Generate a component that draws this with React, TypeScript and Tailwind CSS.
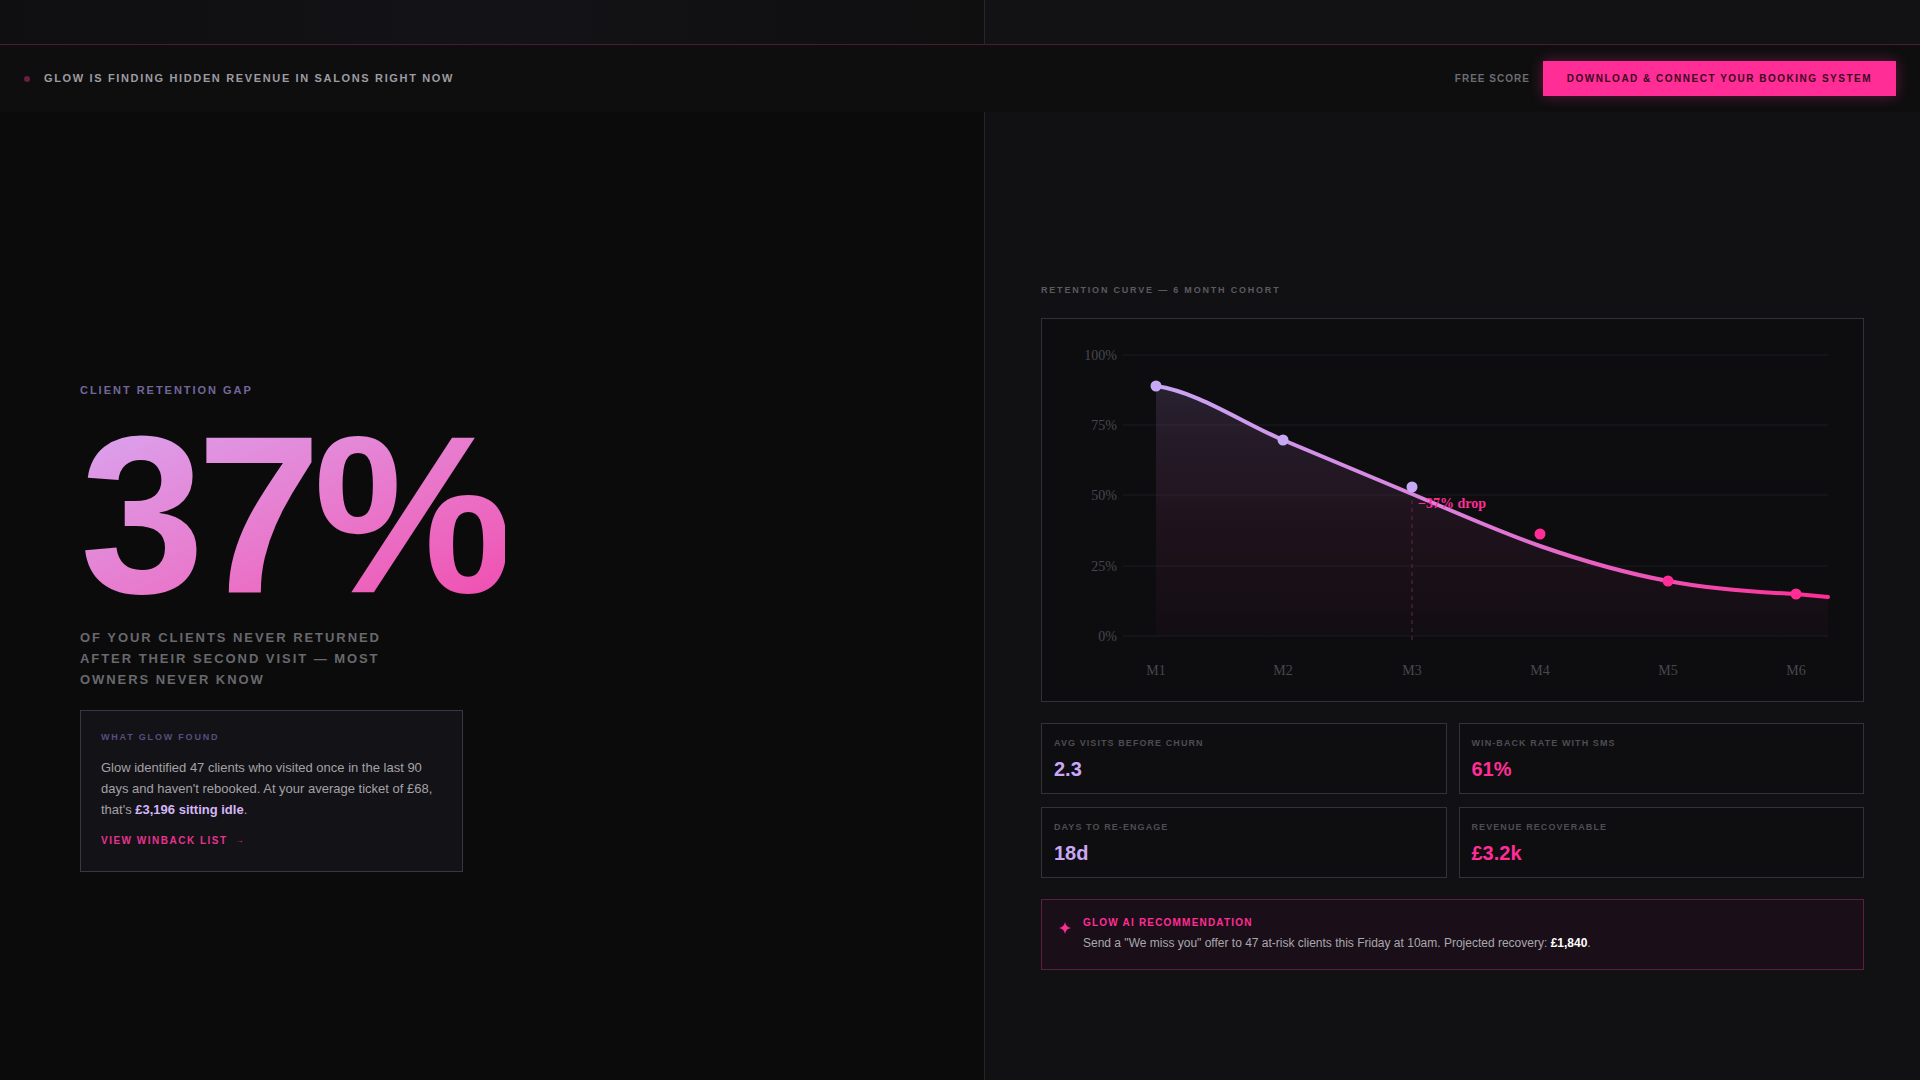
import React from 'react';

const points = [
  { x: 114, y: 67, c: '#c8a8f5' },
  { x: 241, y: 121, c: '#c8a8f5' },
  { x: 370, y: 168, c: '#c8a8f5' },
  { x: 498, y: 215, c: '#ff2d95' },
  { x: 626, y: 262, c: '#ff2d95' },
  { x: 754, y: 275, c: '#ff2d95' },
];

const curve =
  'M114 67 C156 73, 199 103, 241 121 C284 139, 327 157, 370 175 C413 193, 455 212, 498 227 C541 242, 583 254, 626 262 C669 270, 711 273, 754 275 C765 276, 775 277, 786 278';

const gridY = [
  { y: 36, label: '100%' },
  { y: 106, label: '75%' },
  { y: 176, label: '50%' },
  { y: 247, label: '25%' },
  { y: 317, label: '0%' },
];

function RetentionChart() {
  return (
    <svg viewBox="0 0 821 382" className="block h-[382px] w-full">
      <defs>
        <linearGradient id="stroke" x1="114" y1="0" x2="786" y2="0" gradientUnits="userSpaceOnUse">
          <stop offset="0" stopColor="#c9a6f5" />
          <stop offset="0.45" stopColor="#dc7fdc" />
          <stop offset="1" stopColor="#ff2d95" />
        </linearGradient>
        <linearGradient id="area" x1="0" y1="67" x2="0" y2="317" gradientUnits="userSpaceOnUse">
          <stop offset="0" stopColor="#b48be0" stopOpacity="0.16" />
          <stop offset="1" stopColor="#ff2d95" stopOpacity="0.02" />
        </linearGradient>
      </defs>

      {/* grid */}
      {gridY.map((g) => (
        <g key={g.label}>
          <line x1="81" x2="786" y1={g.y} y2={g.y} stroke="#1c1b20" strokeWidth="1" />
          <text
            x="75"
            y={g.y + 5}
            textAnchor="end"
            fontFamily="'Liberation Serif', serif"
            fontSize="14"
            fill="#48474d"
          >
            {g.label}
          </text>
        </g>
      ))}

      {/* area + curve */}
      <path d={`${curve} L786 317 L114 317 Z`} fill="url(#area)" />
      <line x1="370" x2="370" y1="181" y2="323" stroke="#5c2040" strokeWidth="1.2" strokeDasharray="4 4" />
      <path d={curve} fill="none" stroke="url(#stroke)" strokeWidth="4" strokeLinecap="round" />

      {points.map((p, i) => (
        <circle key={i} cx={p.x} cy={p.y} r="5.5" fill={p.c} />
      ))}

      <text x="376" y="189" fontFamily="'Liberation Serif', serif" fontSize="14" fontWeight="700" fill="#ff2d95">
        −37% drop
      </text>

      {/* x labels */}
      {points.map((p, i) => (
        <text
          key={i}
          x={p.x}
          y="356"
          textAnchor="middle"
          fontFamily="'Liberation Serif', serif"
          fontSize="14"
          fill="#48474d"
        >
          M{i + 1}
        </text>
      ))}
    </svg>
  );
}

function StatCard({ label, value, pink }: { label: string; value: string; pink?: boolean }) {
  return (
    <div className="border border-[#33323b] bg-[#0e0e10] px-[12px] pt-[14px] pb-[12px]">
      <div className="text-[9px] font-bold uppercase leading-[11px] tracking-[0.12em] text-[#4d4d53]">{label}</div>
      <div
        className={
          pink
            ? 'mt-[8px] text-[20px] font-semibold leading-[24px] text-[#ff2d95]'
            : 'mt-[8px] text-[20px] font-semibold leading-[24px] text-[#c9a8f5]'
        }
      >
        {value}
      </div>
    </div>
  );
}

export default function App() {
  return (
    <div className="flex h-[1080px] w-full flex-col overflow-hidden bg-[#0b0b0c] font-['Liberation_Sans',Arial,sans-serif]">
      {/* top strip */}
      <div className="grid h-[45px] shrink-0 grid-cols-[984px_1fr] border-b border-[#4a1c33]">
        <div className="bg-gradient-to-r from-[#0f0f11] via-[#131216] to-[#0f0f10]" />
        <div className="border-l border-[#26262a] bg-[#121215]" />
      </div>

      {/* header */}
      <header className="flex h-[67px] shrink-0 items-center justify-between bg-[#0e0e0f] px-6">
        <div className="flex items-center gap-[14px]">
          <span className="h-[6px] w-[6px] rounded-full bg-[#6b1d42]" />
          <span className="text-[11px] font-bold uppercase tracking-[0.15em] text-[#9d9ca2]">
            Glow is finding hidden revenue in salons right now
          </span>
        </div>
        <div className="flex items-center gap-[13px]">
          <span className="text-[10px] font-bold uppercase tracking-[0.1em] text-[#6c6c71]">Free score</span>
          <button className="h-[35px] bg-[#ff2d95] px-[24px] text-[10px] font-bold uppercase tracking-[0.15em] text-[#3a0a21] shadow-[0_0_14px_rgba(255,45,149,0.35)]">
            Download &amp; connect your booking system
          </button>
        </div>
      </header>

      {/* main */}
      <main className="grid flex-1 grid-cols-[984px_1fr]">
        {/* left column */}
        <section className="bg-[#0b0b0c] pl-[80px] pt-[270px]">
          <div className="text-[11px] font-bold uppercase leading-[16px] tracking-[0.18em] text-[#73679a]">
            Client retention gap
          </div>
          <div className="mt-[25px] w-fit bg-gradient-to-br from-[#d8a4f0] to-[#f04aae] bg-clip-text text-[224px] font-bold leading-[0.82] tracking-[-0.035em] text-transparent">
            37%
          </div>
          <p className="mt-[20px] max-w-[320px] text-[13px] font-bold uppercase leading-[21px] tracking-[0.15em] text-[#68686d]">
            Of your clients never returned after their second visit — most owners never know
          </p>

          <div className="mt-5 w-[383px] border border-[#393744] bg-[#131216] px-[20px] pt-[20px] pb-[24px]">
            <div className="text-[9px] font-bold uppercase leading-[12px] tracking-[0.2em] text-[#594d7e]">
              What Glow found
            </div>
            <p className="mt-[14px] text-[13px] leading-[21px] text-[#a3a2a8]">
              Glow identified 47 clients who visited once in the last 90 days and haven't rebooked. At your average
              ticket of £68, that's <span className="font-bold text-[#d3b6f7]">£3,196 sitting idle</span>.
            </p>
            <div className="mt-[15px] flex items-center gap-[8px] text-[10px] font-bold uppercase leading-[12px] tracking-[0.15em] text-[#e8328f]">
              View winback list <span className="text-[8px] tracking-normal">→</span>
            </div>
          </div>
        </section>

        {/* right column */}
        <section className="border-l border-[#26262a] bg-[#111113] px-[56px] pt-[172px]">
          <div className="text-[9px] font-bold uppercase leading-[12px] tracking-[0.2em] text-[#5a5a60]">
            Retention curve — 6 month cohort
          </div>

          <div className="mt-[22px] border border-[#32313b] bg-[#0d0d0f]">
            <RetentionChart />
          </div>

          <div className="mt-[21px] grid grid-cols-2 gap-x-[12px] gap-y-[13px]">
            <StatCard label="Avg visits before churn" value="2.3" />
            <StatCard label="Win-back rate with SMS" value="61%" pink />
            <StatCard label="Days to re-engage" value="18d" />
            <StatCard label="Revenue recoverable" value="£3.2k" pink />
          </div>

          <div className="mt-[21px] flex items-start gap-[12px] border border-[#5e1e40] bg-[#1a0f18] pl-[17px] pr-5 pt-[16px] pb-[18px]">
            <svg viewBox="0 0 12 12" className="mt-[6px] h-[12px] w-[12px] shrink-0">
              <path
                d="M6 0 C6.6 3.6 8.4 5.4 12 6 C8.4 6.6 6.6 8.4 6 12 C5.4 8.4 3.6 6.6 0 6 C3.6 5.4 5.4 3.6 6 0Z"
                fill="#ff2d95"
              />
            </svg>
            <div>
              <div className="text-[10px] font-bold uppercase leading-[13px] tracking-[0.12em] text-[#ff2d95]">
                Glow AI recommendation
              </div>
              <p className="mt-[6px] text-[12px] leading-[16px] text-[#a9a8ae]">
                Send a "We miss you" offer to 47 at-risk clients this Friday at 10am. Projected recovery:{' '}
                <span className="font-bold text-white">£1,840</span>.
              </p>
            </div>
          </div>
        </section>
      </main>
    </div>
  );
}
